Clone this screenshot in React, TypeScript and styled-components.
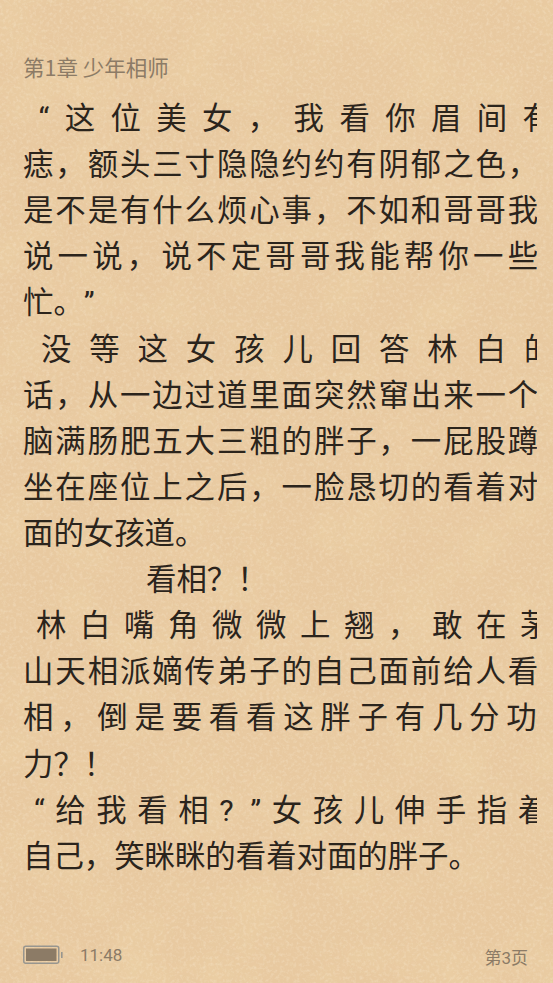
import React from "react";
import styled, { createGlobalStyle } from "styled-components";

const GlobalStyle = createGlobalStyle`
  html, body {
    margin: 0;
    padding: 0;
    background: #e8c9a0;
  }
`;

const Page = styled.div`
  position: relative;
  width: 553px;
  height: 983px;
  overflow: hidden;
  background: #e8c9a0;
  font-family: "Noto Sans CJK SC", "Noto Sans", sans-serif;
`;

// paper grain, sits behind everything
const Grain = styled.svg`
  position: absolute;
  inset: 0;
  width: 553px;
  height: 983px;
`;

const Reader = styled.div`
  position: relative;
  display: flex;
  flex-direction: column;
  height: 983px;
  box-sizing: border-box;
  padding: 52px 16px 3px 23px;
`;

const ChapterTitle = styled.div`
  height: 30px;
  line-height: 30px;
  font-size: 21.5px;
  color: #8c7b66;
  white-space: pre;
`;

const Body = styled.div`
  margin-top: 11px;
  display: flex;
  flex-direction: column;
`;

const Line = styled.div<{ $spacing?: number; $indent?: number }>`
  height: 46.12px;
  line-height: 46px;
  font-size: 30.4px;
  color: #2b241c;
  white-space: pre;
  overflow: hidden;
  text-spacing-trim: space-all;
  letter-spacing: ${(p) => p.$spacing ?? 1.93}px;
  padding-left: ${(p) => p.$indent ?? 0}px;
`;

const Quote = styled.span`
  font-family: Roboto, sans-serif;
`;

const HalfMark = styled.span`
  font-family: Roboto, sans-serif;
  margin-right: 6px;
`;

const Footer = styled.div`
  margin-top: auto;
  height: 50px;
  display: flex;
  align-items: center;
  font-family: Roboto, "Noto Sans CJK SC", sans-serif;
  font-size: 17px;
  color: #8c7b66;
`;

const Clock = styled.span`
  margin-left: 17px;
`;

const PageNo = styled.span`
  margin-left: auto;
  margin-right: 9px;
  padding-top: 3px;
`;

const lines: { text: React.ReactNode; spacing?: number; indent?: number }[] = [
  { text: <><Quote>“</Quote>这位美女，我看你眉间有</>, spacing: 15.4, indent: 15.5 },
  { text: "痣，额头三寸隐隐约约有阴郁之色，" },
  { text: "是不是有什么烦心事，不如和哥哥我" },
  { text: "说一说，说不定哥哥我能帮你一些", spacing: 4.23 },
  { text: <>忙。<Quote>”</Quote></>, spacing: 0 },
  { text: "没等这女孩儿回答林白的", spacing: 17.9, indent: 18 },
  { text: "话，从一边过道里面突然窜出来一个" },
  { text: "脑满肠肥五大三粗的胖子，一屁股蹲" },
  { text: "坐在座位上之后，一脸恳切的看着对" },
  { text: "面的女孩道。", spacing: 0 },
  { text: "看相？！", spacing: 0, indent: 123 },
  { text: "林白嘴角微微上翘，敢在茅", spacing: 13.6, indent: 13 },
  { text: "山天相派嫡传弟子的自己面前给人看" },
  { text: "相，倒是要看看这胖子有几分功", spacing: 6.78 },
  { text: "力？！", spacing: 0 },
  { text: <><Quote>“</Quote>给我看相<HalfMark>?</HalfMark><Quote>”</Quote>女孩儿伸手指着</>, spacing: 10.6, indent: 11 },
  { text: "自己，笑眯眯的看着对面的胖子。", spacing: 0 },
];

function Battery() {
  return (
    <svg width="40" height="20" viewBox="0 0 40 20">
      <rect x="0.75" y="1.25" width="35" height="17" rx="2" fill="none" stroke="#98968f" strokeWidth="1.5" />
      <rect x="3" y="3.5" width="30.5" height="12.5" fill="#8c7b66" />
      <rect x="38" y="7" width="1.6" height="6" fill="#98968f" />
    </svg>
  );
}

export default function App() {
  return (
    <Page>
      <GlobalStyle />
      <Grain aria-hidden="true">
        <filter id="mottle" x="0" y="0" width="100%" height="100%">
          <feTurbulence type="fractalNoise" baseFrequency="0.018" numOctaves="6" seed="11" />
          <feColorMatrix values="0 0 0 0 0.84  0 0 0 0 0.64  0 0 0 0 0.38  1.2 0 0 0 -0.5" />
        </filter>
        <filter id="speck" x="0" y="0" width="100%" height="100%">
          <feTurbulence type="fractalNoise" baseFrequency="0.3" numOctaves="3" seed="4" />
          <feColorMatrix values="0 0 0 0 0.95  0 0 0 0 0.83  0 0 0 0 0.65  0 0.8 0 0 -0.36" />
        </filter>
        <rect width="553" height="983" filter="url(#mottle)" />
        <rect width="553" height="983" filter="url(#speck)" />
      </Grain>
      <Reader>
        <ChapterTitle>第1章 少年相师</ChapterTitle>
        <Body>
          {lines.map((l, i) => (
            <Line key={i} $spacing={l.spacing} $indent={l.indent}>
              {l.text}
            </Line>
          ))}
        </Body>
        <Footer>
          <Battery />
          <Clock>11:48</Clock>
          <PageNo>第3页</PageNo>
        </Footer>
      </Reader>
    </Page>
  );
}
